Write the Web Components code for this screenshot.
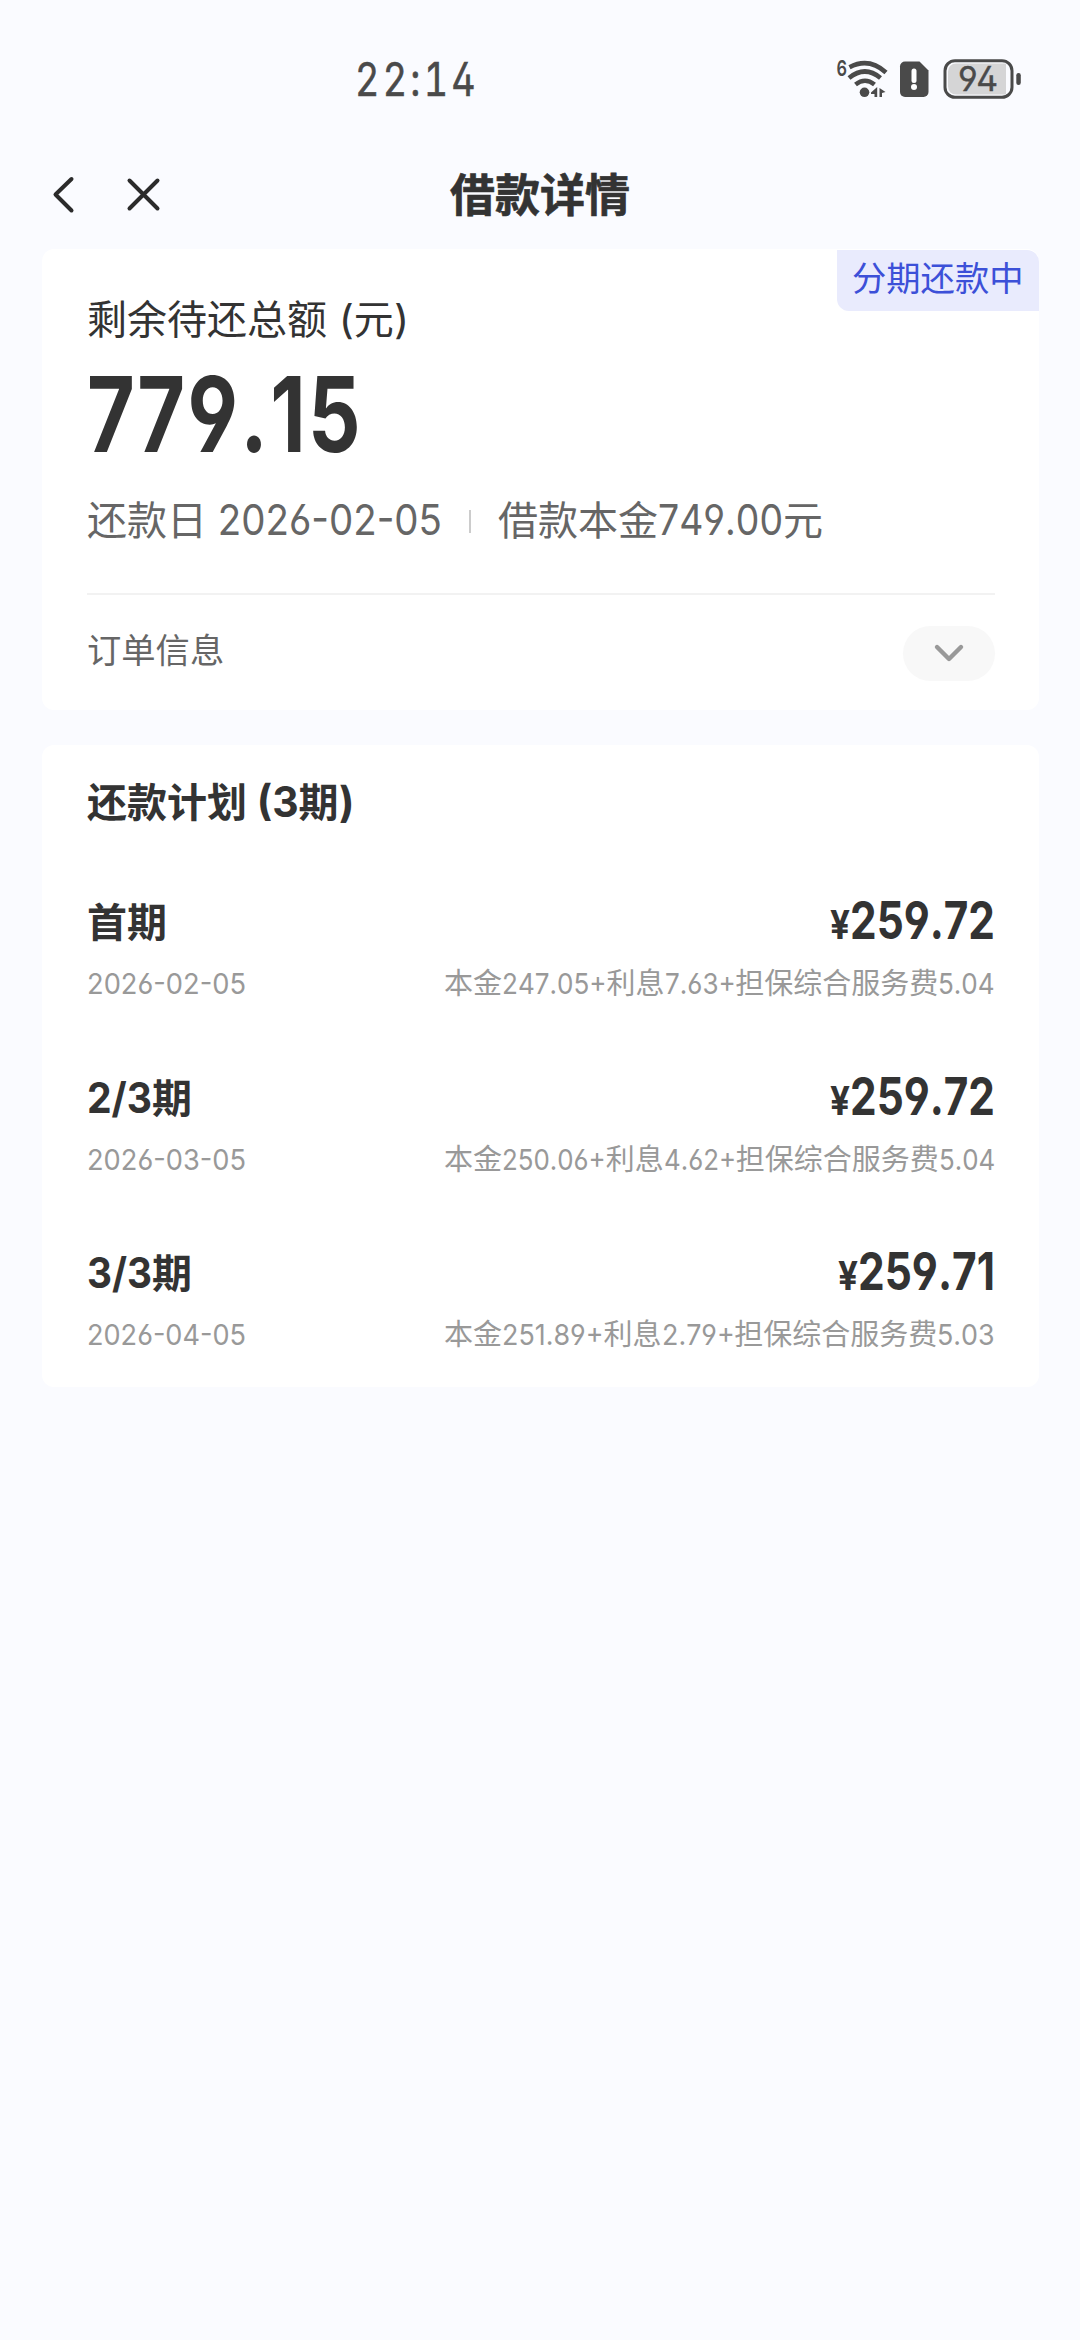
<!DOCTYPE html>
<html lang="zh-CN">
<head>
<meta charset="utf-8">
<title>借款详情</title>
<style>
html,body{margin:0;background:#fafbff}
body{font-family:"Noto Sans CJK SC",sans-serif;color:#333}
</style>
</head>
<body>
<loan-page></loan-page>
<script>
// A run of text set to an exact width: CJK keeps its natural width, Latin and digits are condensed.
class FitText extends HTMLElement {
  connectedCallback() {
    if (this.shadowRoot) return;
    const root = this.attachShadow({ mode: 'open' });
    const size = +this.getAttribute('size');
    const h = this.getAttribute('h') || Math.round(size * 1.25);
    const latin = +this.getAttribute('latin') || size;
    const w = +this.getAttribute('w');
    root.innerHTML = `<style>
      :host{display:block;flex:none;white-space:pre;font-size:${size}px;line-height:${h}px;height:${h}px;${w ? `width:${w}px` : ''}}
      .box{display:inline-block;line-height:0;font-kerning:none;font-family:Inter,"Noto Sans CJK SC",sans-serif;font-size:${latin}px;font-feature-settings:${this.getAttribute('feat') || '"cv03","cv04"'}}
      .in{display:inline-block;transform-origin:0 50%}
    </style>`;
    const parts = this.textContent.match(/[ -~¥]+|[^ -~¥]+/g) || [];
    const boxes = [];
    let cjk = 0, lat = 0;
    for (const p of parts) {
      const s = document.createElement('span');
      root.append(s);
      if (/^[ -~¥]/.test(p)) {
        s.className = 'box';
        const i = document.createElement('span');
        i.className = 'in';
        i.textContent = p;
        s.append(i);
        const n = i.getBoundingClientRect().width;
        lat += n;
        boxes.push([s, i, n]);
      } else {
        s.textContent = p;
        cjk += s.getBoundingClientRect().width;
      }
    }
    if (w && lat) {
      const k = (w - cjk) / lat;
      for (const [s, i, n] of boxes) {
        s.style.width = n * k + 'px';
        i.style.transform = `scaleX(${k})`;
      }
    }
  }
}

class StatusBar extends HTMLElement {
  connectedCallback() {
    this.attachShadow({ mode: 'open' }).innerHTML = `<style>
      :host{display:flex;justify-content:space-between;height:139px;padding:54px 58px 0 355px;box-sizing:border-box;color:#4a4a4a}
      .time{margin-top:-3px;-webkit-text-stroke:.6px #4a4a4a;letter-spacing:4px}
      .icons{display:flex}
      svg{display:block}
    </style>
    <fit-text class="time" size="46" h="50" w="124" feat='"cv02","tnum"'>22:14</fit-text>
    <div class="icons"><svg width="187" height="50" viewBox="835 54 187 50">
      <g fill="none" stroke="#4a4a4a" stroke-linecap="butt">
        <path d="M849.5 67.2Q869 57 886 72.5" stroke-width="4.6"/>
        <path d="M849 78Q865 65 880.5 78" stroke-width="4.6"/>
        <path d="M855.5 84.5Q865 77 874.5 84.5" stroke-width="4.6"/>
      </g>
      <circle cx="864.5" cy="92.3" r="4.8" fill="#4a4a4a"/>
      <path d="M871 92.5L877.2 87V97H874.5V94H871ZM879.5 88L885.5 92L882 93V97H879.5Z" fill="#4a4a4a"/>
      <text x="836.5" y="76" font-family="Inter,sans-serif" font-weight="600" font-size="22" textLength="10.5" lengthAdjust="spacingAndGlyphs" fill="#4a4a4a">6</text>
      <path d="M905 61.5H919.5L928.5 70.5V92A5 5 0 0 1 923.5 97H905A5 5 0 0 1 900 92V66.500A5 5 0 0 1 905 61.500Z" fill="#4a4a4a"/>
      <path d="M914 71V80.500" stroke="#fff" stroke-width="5" stroke-linecap="round"/>
      <circle cx="914" cy="87" r="3" fill="#fff"/>
      <rect x="945" y="60.700" width="67" height="36.600" rx="10" fill="#fafbff" stroke="#4a4a4a" stroke-width="3"/>
      <path d="M956 63.500H1006V94.500H956A8 8 0 0 1 948 86.500V71.500A8 8 0 0 1 956 63.500Z" fill="#d5d5d6"/>
      <rect x="1016.300" y="73" width="4.500" height="12" rx="2.200" fill="#4a4a4a"/>
      <text x="958" y="91" font-family="Inter,sans-serif" font-weight="400" font-size="34" textLength="40" lengthAdjust="spacingAndGlyphs" fill="#4a4a4a" stroke="#4a4a4a" stroke-width=".4" style="font-feature-settings:'cv02','cv04'">94</text>
    </svg></div>`;
  }
}

class NavBar extends HTMLElement {
  connectedCallback() {
    this.attachShadow({ mode: 'open' }).innerHTML = `<style>
      :host{display:grid;grid-template-columns:1fr auto 1fr;align-items:center;height:110px;padding:0 0 0 50px;--c:#2b2b2b}
      .left{display:flex;gap:50px}
      h1{margin:-2px 50px 0 0;font-size:45px;line-height:60px;font-weight:700;-webkit-text-stroke:.6px #333}
      path{fill:none;stroke:var(--c);stroke-width:4;stroke-linecap:round;stroke-linejoin:round}
      svg{display:block}
    </style>
    <div class="left">
      <svg width="26" height="40"><path d="M21.500 5L5.500 20.500L21.500 36.500"/></svg>
      <svg width="36" height="40"><path d="M3.500 6.500L31.500 34.500M31.500 6.500L3.500 34.500"/></svg>
    </div>
    <h1><slot></slot></h1><span></span>`;
  }
}

class PageCard extends HTMLElement {
  connectedCallback() {
    this.attachShadow({ mode: 'open' }).innerHTML = `<style>
      :host{display:flex;flex-direction:column;position:relative;box-sizing:border-box;margin:0 41px 0 42px;padding:0 44px 0 45px;border-radius:12px;background:#fff}
    </style><slot></slot>`;
  }
}

class StatusTag extends HTMLElement {
  connectedCallback() {
    this.attachShadow({ mode: 'open' }).innerHTML = `<style>
      :host{position:absolute;top:1px;right:0;width:202px;height:61px;box-sizing:border-box;padding-left:15px;border-radius:0 12px 0 12px;background:#e9ebfd;color:#3c50d8;font-size:34.300px;line-height:52px;white-space:nowrap}
    </style><slot></slot>`;
  }
}

class LoanSummary extends HTMLElement {
  connectedCallback() {
    this.attachShadow({ mode: 'open' }).innerHTML = `<style>
      :host{display:block}
      page-card{height:461px;padding-top:43px}
      .amount{margin-top:20px;font-weight:700;letter-spacing:3px}
      .facts{display:flex;align-items:center;margin-top:41px;color:#666}
      .bar{width:2px;height:23px;margin:7px 27px 0 27px;background:#ccc}
      .line{height:2px;margin-top:50px;background:#f2f2f2}
      .order{display:flex;justify-content:space-between;margin-top:31px;color:#666}
      .pill{display:flex;align-items:center;justify-content:center;width:92px;height:55px;border-radius:28px;background:#f8f8f8}
    </style>
    <page-card>
      <status-tag>分期还款中</status-tag>
      <fit-text size="40" h="50" w="322">剩余待还总额 (元)</fit-text>
      <fit-text class="amount" size="104" h="90" w="276">779.15</fit-text>
      <div class="facts">
        <fit-text size="40" latin="42" h="50" w="355">还款日 2026-02-05</fit-text>
        <span class="bar"></span>
        <fit-text size="40" latin="42" h="50" w="325">借款本金749.00元</fit-text>
      </div>
      <div class="line"></div>
      <div class="order">
        <fit-text size="34.3" h="44">订单信息</fit-text>
        <span class="pill"><svg width="34" height="22"><path d="M5 4L17 16L29 4" fill="none" stroke="#999" stroke-width="4.400" stroke-linecap="round" stroke-linejoin="round"/></svg></span>
      </div>
    </page-card>`;
  }
}

class PlanItem extends HTMLElement {
  connectedCallback() {
    const a = n => this.getAttribute(n);
    this.attachShadow({ mode: 'open' }).innerHTML = `<style>
      :host{display:block;height:106px}
      .row{display:flex;justify-content:space-between;align-items:flex-start}
      .top{height:50px;font-weight:700}
      .sum{display:flex;align-items:flex-start}
      .sub{margin-top:16px;color:#999}
    </style>
    <div class="row top">
      <fit-text size="40" h="50" latin="42" ${a('nw') ? `w="${a('nw')}"` : ''}>${a('name')}</fit-text>
      <span class="sum"><fit-text size="40" h="54" w="20">¥</fit-text><fit-text size="52" h="43" w="${a('aw')}">${a('amount')}</fit-text></span>
    </div>
    <div class="row sub">
      <fit-text size="29" h="40" w="159">${a('date')}</fit-text>
      <fit-text size="29" h="40" w="551">${a('detail')}</fit-text>
    </div>`;
  }
}

class RepaymentPlan extends HTMLElement {
  connectedCallback() {
    this.attachShadow({ mode: 'open' }).innerHTML = `<style>
      :host{display:block;margin-top:35px}
      page-card{height:641.500px;padding-top:30px}
      .title{font-weight:700}
      .list{display:flex;flex-direction:column;gap:69.500px;margin-top:70px}
    </style>
    <page-card>
      <fit-text class="title" size="40" latin="42" h="50" w="267">还款计划 (3期)</fit-text>
      <div class="list">
        <plan-item name="首期" amount="259.72" aw="145" date="2026-02-05" detail="本金247.05+利息7.63+担保综合服务费5.04"></plan-item>
        <plan-item name="2/3期" nw="105" amount="259.72" aw="145" date="2026-03-05" detail="本金250.06+利息4.62+担保综合服务费5.04"></plan-item>
        <plan-item name="3/3期" nw="105" amount="259.71" aw="137" date="2026-04-05" detail="本金251.89+利息2.79+担保综合服务费5.03"></plan-item>
      </div>
    </page-card>`;
  }
}

class LoanPage extends HTMLElement {
  connectedCallback() {
    this.attachShadow({ mode: 'open' }).innerHTML = `<style>
      :host{display:block;width:1080px;height:2340px;overflow:hidden;background:#fafbff}
    </style>
    <status-bar></status-bar>
    <nav-bar>借款详情</nav-bar>
    <loan-summary></loan-summary>
    <repayment-plan></repayment-plan>`;
  }
}

customElements.define('fit-text', FitText);
customElements.define('status-tag', StatusTag);
customElements.define('page-card', PageCard);
customElements.define('status-bar', StatusBar);
customElements.define('nav-bar', NavBar);
customElements.define('plan-item', PlanItem);
customElements.define('loan-summary', LoanSummary);
customElements.define('repayment-plan', RepaymentPlan);
customElements.define('loan-page', LoanPage);
</script>
</body>
</html>
